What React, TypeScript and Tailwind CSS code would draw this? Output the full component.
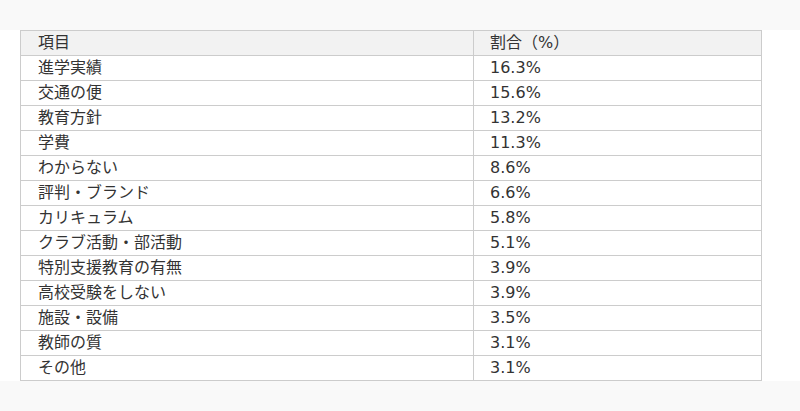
const rows: [string, string][] = [
  ['進学実績', '16.3%'],
  ['交通の便', '15.6%'],
  ['教育方針', '13.2%'],
  ['学費', '11.3%'],
  ['わからない', '8.6%'],
  ['評判・ブランド', '6.6%'],
  ['カリキュラム', '5.8%'],
  ['クラブ活動・部活動', '5.1%'],
  ['特別支援教育の有無', '3.9%'],
  ['高校受験をしない', '3.9%'],
  ['施設・設備', '3.5%'],
  ['教師の質', '3.1%'],
  ['その他', '3.1%'],
]

export default function App() {
  return (
    <div
      className="min-h-[411px] w-[800px] bg-[#f9f9f9] pt-[30px] text-[16px] text-[#333]"
      style={{ fontFamily: '"DejaVu Sans", "Noto Sans CJK JP", sans-serif' }}
    >
      <div className="bg-white pl-5">
        <table className="w-[742px] border-collapse">
          <thead>
            <tr className="h-[25px] bg-[#f2f2f2]">
              <th className="w-[453px] border border-[#ccc] py-0 pl-[17px] text-left font-normal leading-[24px]">項目</th>
              <th className="border border-[#ccc] py-0 pl-[16px] text-left font-normal leading-[24px]">割合（%）</th>
            </tr>
          </thead>
          <tbody>
            {rows.map(([name, pct]) => (
              <tr key={name} className="h-[25px]">
                <td className="border border-[#ccc] py-0 pl-[17px] leading-[24px]">{name}</td>
                <td className="border border-[#ccc] py-0 pl-[16px] leading-[24px]">{pct}</td>
              </tr>
            ))}
          </tbody>
        </table>
      </div>
    </div>
  )
}
